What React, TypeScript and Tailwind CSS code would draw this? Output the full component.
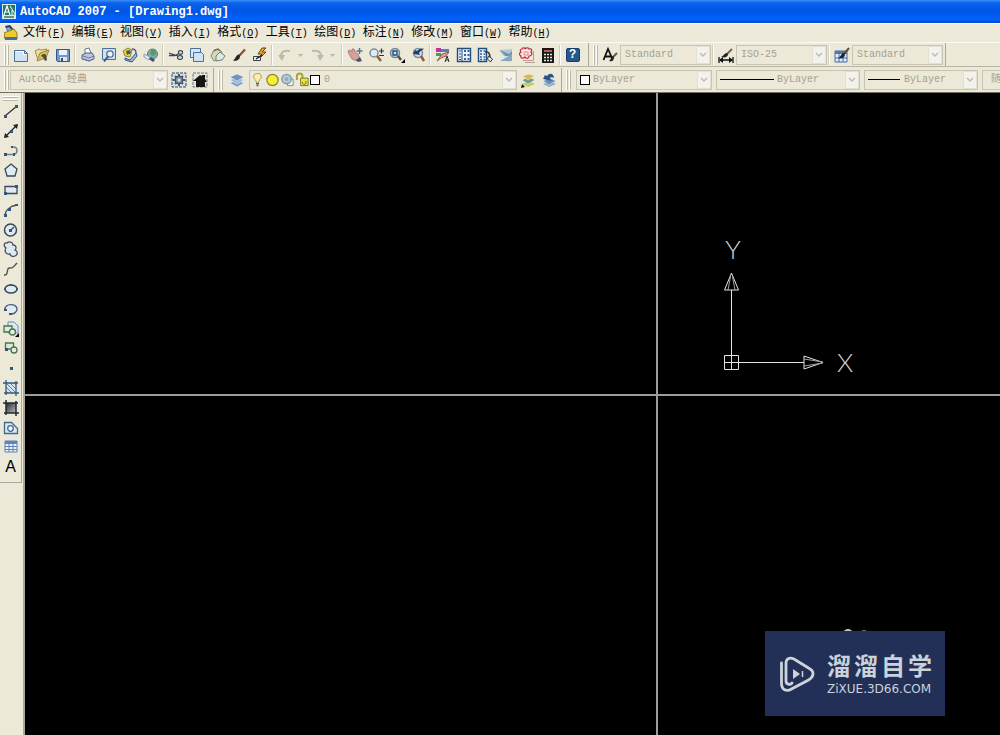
import type { ReactNode } from 'react';
import clsx from 'clsx';

type Tool = { label: string; icon: ReactNode };

const Icon = ({ children, narrow }: { children: ReactNode; narrow?: boolean }) => (
  <svg
    viewBox="0 0 16 16"
    className={clsx('h-4 shrink-0', narrow ? 'w-[15px]' : 'w-4')}
    fill="none"
    aria-hidden="true"
  >
    {children}
  </svg>
);

const menus = [
  ['文件', 'F'],
  ['编辑', 'E'],
  ['视图', 'V'],
  ['插入', 'I'],
  ['格式', 'O'],
  ['工具', 'T'],
  ['绘图', 'D'],
  ['标注', 'N'],
  ['修改', 'M'],
  ['窗口', 'W'],
  ['帮助', 'H'],
];

const fileTools: Tool[] = [
  {
    label: '新建',
    icon: (
      <>
        <path d="M1.5 3.5h10l3 3v8h-13z" fill="#cfe3f5" stroke="#4b6f98" />
        <path d="M2.5 4.5h8v3h3" stroke="#fff" />
        <path d="M11.5 3.5v3h3" stroke="#4b6f98" />
      </>
    ),
  },
  {
    label: '打开',
    icon: (
      <>
        <path d="M1 4l4-2 2 1 6-1-2 4-7 7z" fill="#f0dc96" stroke="#8f7a3a" strokeWidth="0.8" />
        <path d="M3 14l3-8 9-3-3 8z" fill="#d9bc5c" stroke="#8f7a3a" strokeWidth="0.8" />
        <path d="M7 9c1-2 4-3 5-1l1 5-2 1-2-4z" fill="#4c4a3a" />
      </>
    ),
  },
  {
    label: '保存',
    icon: (
      <>
        <path d="M1.5 2.5h13v12h-12l-1-1z" fill="#6f97c8" stroke="#33598c" />
        <path d="M4 3h8v5H4z" fill="#e9f1fa" />
        <path d="M5 10h7v4H5z" fill="#dbe6f2" />
        <path d="M6 11h2v3H6z" fill="#2c4f82" />
      </>
    ),
  },
];

const plotTools: Tool[] = [
  {
    label: '打印',
    icon: (
      <>
        <path d="M5 7V2l4-1 2 5" fill="#fff" stroke="#66739b" />
        <path d="M2 8l4-2h6l2 3v3l-5 2-7-2z" fill="#bcc6df" stroke="#4e5c86" />
        <path d="M3 9l6 2 5-2M4 12l5 2" stroke="#6e7aa4" />
      </>
    ),
  },
  {
    label: '打印预览',
    icon: (
      <>
        <path d="M1.5 1.5h13v11h-13z" fill="#cfe0f1" stroke="#4b6f98" />
        <circle cx="9" cy="7" r="3.2" fill="#eef6fc" stroke="#4f7198" strokeWidth="1.3" />
        <path d="M7 9.500l-4 5" stroke="#315786" strokeWidth="2" />
      </>
    ),
  },
  {
    label: '发布',
    icon: (
      <>
        <path d="M1 4l5-3 4 2-2 7-5-1z" fill="#f1d233" stroke="#7a6a20" strokeWidth="0.8" />
        <path d="M4 4l4-1 1 3-4 2z" fill="#2d6275" />
        <path d="M3 11l5 2 6-7 1 3-5 6-7-2z" fill="#9db9d8" stroke="#35557f" />
        <path d="M10 2c3 0 4 2 4 4" stroke="#44618a" strokeWidth="1.3" />
      </>
    ),
  },
  {
    label: '三维 DWF',
    icon: (
      <>
        <circle cx="9.500" cy="7" r="5" fill="#7ea9bb" stroke="#56788c" />
        <path d="M8 3l4 0 1 4-3 2-3-2z" fill="#5d9a5a" />
        <path d="M1 7l6 3-1 3-5-3z" fill="#e4edf5" stroke="#8aa0b0" />
        <path d="M6 12l4 3 2-2-4-3z" fill="#3f526a" />
      </>
    ),
  },
];

const editTools: Tool[] = [
  {
    label: '剪切',
    icon: (
      <>
        <path d="M1 6l9 3M1 8.500h6l4-2" stroke="#3a4656" strokeWidth="1.3" />
        <ellipse cx="12.500" cy="5.500" rx="2" ry="1.800" stroke="#3a4656" strokeWidth="1.2" />
        <ellipse cx="12" cy="10.500" rx="2.500" ry="1.800" stroke="#3a4656" strokeWidth="1.2" />
      </>
    ),
  },
  {
    label: '复制',
    icon: (
      <>
        <path d="M1.500 1.500h10v9h-10z" fill="#d6e6f5" stroke="#47729f" />
        <path d="M4.500 5.500h8l2 2v7h-10z" fill="#cfe3f5" stroke="#47729f" />
      </>
    ),
  },
  {
    label: '粘贴',
    icon: (
      <>
        <path d="M1 9l3-6 4-1 4 3-2 7-6 2z" fill="#d9d8b4" stroke="#84866a" />
        <path d="M6 9l4-4 5 4-3 4-6 1z" fill="#dfe9ea" stroke="#6a8076" />
        <path d="M4 4l4-2 2 2" stroke="#6b6b55" strokeWidth="1.3" />
      </>
    ),
  },
  {
    label: '特性匹配',
    icon: (
      <>
        <path d="M14 2.500L8 9" stroke="#8a4a36" strokeWidth="2.200" />
        <path d="M8 7.500c-3 0-3 4-6 6 4 1 7-1 7-4.500z" fill="#262626" />
      </>
    ),
  },
  {
    label: '块编辑器',
    icon: (
      <>
        <path d="M1.500 9.500h7v4h-7z" fill="#e8eef4" stroke="#36404e" />
        <path d="M10 1L6 7h4l-2 4 6-6h-4l4-4z" fill="#f0aa30" stroke="#6b4210" />
        <path d="M4 12l6-4" stroke="#222" strokeWidth="1.500" />
      </>
    ),
  },
];

const zoomTools: Tool[] = [
  {
    label: '实时平移',
    icon: (
      <>
        <path d="M1 4l2-1 2 2 0-3 2 0 2 4 2 1 2 5-3 2-5-2-3-5z" fill="#d3a09c" stroke="#a56f6c" strokeWidth="0.8" />
        <path d="M12.500 1v6M9.500 4h6" stroke="#5c728c" strokeWidth="1.500" />
        <path d="M9 13l4-3 2 4-4 1z" fill="#44556e" />
      </>
    ),
  },
  {
    label: '实时缩放',
    icon: (
      <>
        <circle cx="6" cy="6" r="4" fill="#dbeaf3" stroke="#7f8f99" strokeWidth="1.500" />
        <path d="M9 9l4 5" stroke="#8a5e40" strokeWidth="2.500" />
        <path d="M11 4h5M13.500 1.500v5M11 8.500h5" stroke="#223956" strokeWidth="1.200" />
      </>
    ),
  },
  {
    label: '窗口缩放',
    icon: (
      <>
        <circle cx="6" cy="6" r="4.500" fill="#cde0ef" stroke="#6f8496" strokeWidth="1.500" />
        <path d="M4 4h4v4H4z" stroke="#274b78" strokeWidth="1.400" />
        <path d="M9 9l3 4" stroke="#5a4c44" strokeWidth="2.500" />
        <path d="M16 12v4h-4z" fill="#000" />
      </>
    ),
  },
  {
    label: '缩放上一个',
    icon: (
      <>
        <circle cx="8" cy="6" r="4.500" fill="#cde0ef" stroke="#7d909f" strokeWidth="1.500" />
        <path d="M11 9l3 5" stroke="#8a5e40" strokeWidth="2.500" />
        <path d="M3 7l2-4 2 1c2-2 4-3 7-2-3 1-4 3-5 4l1 2z" fill="#263f66" />
      </>
    ),
  },
];

const paletteTools: Tool[] = [
  {
    label: '特性',
    icon: (
      <>
        <path d="M1 1h5v4H1z" fill="#b935a4" />
        <path d="M1 6h5v3H1z" fill="#3da05a" />
        <path d="M6 2h8v3H6z" fill="#547fc3" />
        <path d="M2 14l5-7 7-2-3 4-5 2z" fill="#e2a38e" stroke="#7f4438" strokeWidth="0.8" />
        <path d="M10 15l2-6 2 6M11 13h3" stroke="#303030" />
      </>
    ),
  },
  {
    label: '设计中心',
    icon: (
      <>
        <path d="M1.500 1.500h13v13h-13z" fill="#eaf3fb" stroke="#244c7c" strokeWidth="1.400" />
        <path d="M6 2v12" stroke="#244c7c" />
        <path d="M3 4h2M3 7h2M3 10h2M3 12.500h2" stroke="#244c7c" />
        <path d="M8 4h2M11.500 4h2M8 8h2M11.500 8h2M8 12h2M11.500 12h2" stroke="#316398" strokeWidth="2" />
      </>
    ),
  },
  {
    label: '工具选项板',
    icon: (
      <>
        <path d="M1.500 1.500h8v13h-8z" fill="#eaf3fb" stroke="#244c7c" strokeWidth="1.400" />
        <path d="M3 4h2M3 7h2M3 10h2M3 12.500h2M6.500 4h2M6.500 7h2M6.500 10h2M6.500 12.500h2" stroke="#316398" strokeWidth="1.500" />
        <path d="M8 5c4-1 5 2 5 6" stroke="#333" strokeWidth="1.500" />
        <path d="M11.500 9l4 3-2 3-3-3z" fill="#eee" stroke="#333" />
      </>
    ),
  },
  {
    label: '图纸集',
    icon: (
      <>
        <path d="M1 3l13-1v11l-4 2z" fill="#b4c6d4" />
        <path d="M2 3l9 4 3-3v6l-5 1z" fill="#6f93b0" />
        <path d="M1 10l8-1 6 2-7 3z" fill="#e3ebef" />
        <path d="M2 14l12-7v7z" fill="#8aa7bd" />
      </>
    ),
  },
  {
    label: '标记集',
    icon: (
      <>
        <path d="M4 13.500h10.500V4M6 15.500h10" stroke="#b99a9a" />
        <path d="M3 2c1-2 3-1 3 0 1-2 4-1 4 0 3-1 3 2 2 3 2 2 0 4-2 4 0 3-3 3-4 1-2 2-5 1-4-1-2-1-2-3 0-4-1-1-1-3 1-3z" fill="#f9e7e7" stroke="#c32f3e" strokeWidth="1.200" />
        <path d="M5 5h4v3H5z" stroke="#dc8a8f" />
      </>
    ),
  },
  {
    label: '计算器',
    icon: (
      <>
        <path d="M2 1h12v15H2z" fill="#171717" />
        <path d="M4 3h8v2H4z" fill="#c25a5a" />
        <path d="M4 7.500h2M7 7.500h2M10 7.500h2M4 10.500h2M7 10.500h2M10 10.500h2M4 13.500h2M7 13.500h2M10 13.500h2" stroke="#e9e5d4" strokeWidth="1.500" />
      </>
    ),
  },
];

const drawTools: Tool[] = [
  {
    label: '直线',
    icon: (
      <>
        <path d="M2 13L14 3" stroke="#333" strokeWidth="1.300" />
        <path d="M1 12h3v3H1zM12 2h3v3h-3z" fill="#31567f" />
      </>
    ),
  },
  {
    label: '构造线',
    icon: (
      <>
        <path d="M2 14L14 2" stroke="#222" strokeWidth="1.300" />
        <path d="M1 15l1-5 4 4zM15 1l-5 1 4 4z" fill="#222" />
        <path d="M7 7h3v3H7z" fill="#31567f" />
      </>
    ),
  },
  {
    label: '多段线',
    icon: (
      <>
        <path d="M2 12.500h9c4-1 4-7 0-7.500H8" stroke="#6e7f8e" strokeWidth="1.400" />
        <path d="M1 11h3v3H1zM10 11h2v3h-2zM8 4h2v2H8z" fill="#31567f" />
      </>
    ),
  },
  {
    label: '正多边形',
    icon: <path d="M8 2l6 5-2 7H4L2 7z" fill="#dfeaf3" stroke="#39485a" strokeWidth="1.300" />,
  },
  {
    label: '矩形',
    icon: (
      <>
        <path d="M2 4.500h12v7H2z" fill="#dfeaf3" stroke="#39485a" strokeWidth="1.300" />
        <path d="M1 10h3v3H1zM12 3h3v3h-3z" fill="#31567f" />
      </>
    ),
  },
  {
    label: '圆弧',
    icon: (
      <>
        <path d="M2 14C2 8 7 4 14 3" stroke="#4a5058" strokeWidth="1.300" />
        <path d="M1 12h3v3H1zM5 6h3v3H5zM12 2h3v2h-3z" fill="#31567f" />
      </>
    ),
  },
  {
    label: '圆',
    icon: (
      <>
        <circle cx="7.500" cy="8" r="6" fill="#dfeaf3" stroke="#39485a" strokeWidth="1.500" />
        <path d="M7 9l4-4" stroke="#31567f" strokeWidth="1.500" />
        <path d="M6 7h3v3H6z" fill="#31567f" />
      </>
    ),
  },
  {
    label: '修订云线',
    icon: (
      <path d="M3 7C0 5 1 1 4 2c2-2 6-1 6 2 3 0 4 3 2 5 3 1 3 5 0 6-2 1-5 0-5-2-4 1-6-3-4-6z" fill="#dfe7f0" stroke="#454f60" strokeWidth="1.300" />
    ),
  },
  {
    label: '样条曲线',
    icon: <path d="M1 14c5 1 2-8 6-7 3 1 4-2 7-5" stroke="#565249" strokeWidth="1.400" />,
  },
  {
    label: '椭圆',
    icon: (
      <>
        <ellipse cx="8" cy="8" rx="6" ry="4" fill="#dfeaf3" stroke="#39485a" strokeWidth="1.500" />
        <path d="M1 7h2v2H1zM13 7h2v2h-2zM7 3h2v2H7z" fill="#31567f" />
      </>
    ),
  },
  {
    label: '椭圆弧',
    icon: (
      <>
        <path d="M2 9C1 2 14 2 14 8c0 3-3 5-6 5V8z" fill="#dfeaf3" />
        <path d="M2 9C1 2 14 2 14 8c0 3-3 5-6 5" stroke="#44618a" strokeWidth="1.400" />
        <path d="M1 8h3v2H1zM6 12h3v2H6z" fill="#31567f" />
      </>
    ),
  },
  {
    label: '插入块',
    icon: (
      <>
        <path d="M5 1h6l4 4v7H5z" fill="#dce8f3" stroke="#6e8cab" />
        <path d="M1 5h8v6H1z" fill="#dcecd8" stroke="#4a7350" strokeWidth="1.300" />
        <circle cx="9.500" cy="11" r="3" fill="#e5eee0" stroke="#4a7350" strokeWidth="1.300" />
        <path d="M16 12v4h-4z" fill="#000" />
      </>
    ),
  },
  {
    label: '创建块',
    icon: (
      <>
        <path d="M2.500 3h8v6h-8z" fill="#dcecd8" stroke="#4a7350" strokeWidth="1.300" />
        <circle cx="11" cy="10" r="3" fill="#e5eee0" stroke="#4a7350" strokeWidth="1.300" />
        <path d="M2 8h3v3H2z" fill="#31567f" />
      </>
    ),
  },
  { label: '点', icon: <path d="M7 7h3v3H7z" fill="#31567f" /> },
  {
    label: '图案填充',
    icon: (
      <>
        <path d="M3 3h10v10H3z" fill="#d5e6f3" />
        <path d="M3 7l6 6M3 3l10 10M7 3l6 6M3 11l2 2M11 3l2 2" stroke="#5a83aa" />
        <path d="M3 0v15M13 1v15M0 3h15M1 13h15" stroke="#315a80" strokeWidth="1.300" />
      </>
    ),
  },
  {
    label: '渐变色',
    icon: (
      <>
        <defs>
          <linearGradient id="shade" x1="0" y1="0" x2="1" y2="1">
            <stop offset="0" stopColor="#26292c" />
            <stop offset="1" stopColor="#b9bdc0" />
          </linearGradient>
        </defs>
        <path d="M3 3h10v10H3z" fill="url(#shade)" />
        <path d="M3 0v15M13 1v15M0 3h15M1 13h15" stroke="#1f2a33" strokeWidth="1.500" />
      </>
    ),
  },
  {
    label: '面域',
    icon: (
      <>
        <path d="M1.500 2.500h7l6 6v5h-13z" fill="#d8e8f5" stroke="#44698f" strokeWidth="1.300" />
        <circle cx="7.500" cy="8.500" r="2.800" fill="#f6fafd" stroke="#44698f" strokeWidth="1.300" />
      </>
    ),
  },
  {
    label: '表格',
    icon: (
      <>
        <path d="M2 2h12v11H2z" fill="#edf4fb" stroke="#5b81b5" />
        <path d="M2 2h12v3H2z" fill="#5d86c0" />
        <path d="M6 3v10M10 3v10M2 7.500h12M2 10.500h12" stroke="#5b81b5" />
      </>
    ),
  },
];

const textStyleIcon = (
  <>
    <path d="M1.500 13L6 2l4 9M3 9.500h6" stroke="#111" strokeWidth="1.800" />
    <path d="M15 6l-4 4" stroke="#6a5948" strokeWidth="2.200" />
    <path d="M11 9c-2 0-2 4-4 5 3 1 5 0 5-4z" fill="#222" />
  </>
);

const dimStyleIcon = (
  <>
    <path d="M1 10v6M15 10v6" stroke="#111" strokeWidth="1.300" />
    <path d="M2 13h12" stroke="#111" strokeWidth="1.500" />
    <path d="M1 13l4-3v6zM15 13l-4-3v6z" fill="#111" />
    <path d="M14 2L9 7" stroke="#8a5a48" strokeWidth="2" />
    <path d="M9 6c-3 0-3 3-6 4 4 1 7 0 7-3z" fill="#222" />
  </>
);

const tableStyleIcon = (
  <>
    <path d="M1 4h12v11H1z" fill="#e2edf8" stroke="#4669a2" />
    <path d="M1 4h12v3H1z" fill="#5578ae" />
    <path d="M5 4v11M9 4v11M1 11h12" stroke="#4669a2" />
    <path d="M15 1l-5 6" stroke="#6a4a38" strokeWidth="2" />
    <path d="M10 6c-3 0-3 4-6 5 4 1 7 0 7-4z" fill="#1c2433" />
  </>
);

const layersIcon = (
  <>
    <path d="M1 11l7-3 7 3-7 4z" fill="#7ea0c4" stroke="#f3f5f5" strokeWidth="0.500" />
    <path d="M1 8l7-3 7 3-7 4z" fill="#9bb8d6" stroke="#f3f5f5" strokeWidth="0.500" />
    <path d="M1 5l7-3 7 3-7 4z" fill="#6f95bf" stroke="#f3f5f5" strokeWidth="0.500" />
  </>
);

const gearIcon = (
  <>
    <path d="M1 1h14v14H1z" fill="#d7dfe6" stroke="#33475c" strokeDasharray="3 1" />
    <path d="M8 2v12M2 8h12M4 4l8 8M12 4l-8 8" stroke="#4a5a6a" strokeWidth="2" />
    <circle cx="8" cy="8" r="4" fill="#78899a" stroke="#33475c" />
    <circle cx="8" cy="8" r="1.500" fill="#e8edf1" />
  </>
);

const homeIcon = (
  <>
    <path d="M1 1h14v14H1z" fill="#e4e4dc" stroke="#777" strokeDasharray="3 1" />
    <path d="M1 9l7-6 2 1V3h3v4l2 3h-2v5H4V9z" fill="#151515" />
  </>
);

const undoIcon = (
  <>
    <path d="M4 9c0-5 5-6 9-5" stroke="#bdbaad" strokeWidth="2" />
    <path d="M1 8h7l-3 6z" fill="#bdbaad" />
  </>
);

const redoIcon = (
  <>
    <path d="M12 9c0-5-5-6-9-5" stroke="#bdbaad" strokeWidth="2" />
    <path d="M15 8H8l3 6z" fill="#bdbaad" />
  </>
);

function ToolButton({ label, icon, tall }: Tool & { tall?: boolean }) {
  return (
    <button
      aria-label={label}
      className={clsx('w-[21px] flex items-center justify-center shrink-0', tall ? 'h-full' : 'h-5')}
    >
      <Icon>{icon}</Icon>
    </button>
  );
}

function ToolGroup({ tools }: { tools: Tool[] }) {
  return (
    <div className="flex">
      {tools.map((tool) => (
        <ToolButton key={tool.label} {...tool} />
      ))}
    </div>
  );
}

function ListArrow({ label }: { label: string }) {
  return (
    <button aria-label={label} className="w-[11px] h-5 flex items-center justify-center">
      <svg viewBox="0 0 5 3" className="w-[5px] h-[3px]" aria-hidden="true">
        <path d="M0 0h5L2.500 3z" fill="#b8b4a3" />
      </svg>
    </button>
  );
}

const Divider = () => (
  <div className="w-1 h-5 flex justify-center shrink-0">
    <div className="w-[2px] bg-[#d0ccba] border-r border-white" />
  </div>
);

const Grip = () => (
  <div className="flex gap-px w-[6px] h-5 shrink-0">
    <div className="w-[2px] border-l border-white bg-[#bdb9a6]" />
    <div className="w-[2px] border-l border-white bg-[#bdb9a6]" />
  </div>
);

type ComboProps = {
  label: string;
  value: string;
  className: string;
  selectClass?: string;
  children?: ReactNode;
};

function Combo({ label, value, className, selectClass = 'pl-1', children }: ComboProps) {
  return (
    <div className={clsx('relative h-5 shrink-0', className)}>
      <select
        aria-label={label}
        disabled
        className={clsx(
          'block w-full h-full appearance-none bg-[#ece9d8] border border-[#c9c5b2] text-[#a5a18f] text-[10px] leading-4 opacity-100',
          selectClass
        )}
      >
        <option>{value}</option>
      </select>
      {children}
      <div className="absolute right-px top-px bottom-px w-[14px] bg-[#f3f2ec] border border-[#e2dfd3] flex items-center justify-center pointer-events-none">
        <svg viewBox="0 0 8 6" className="w-2 h-[6px]" fill="none" aria-hidden="true">
          <path d="M1 1l3 3 3-3" stroke="#bfbcac" strokeWidth="1.500" />
        </svg>
      </div>
    </div>
  );
}

const barClass = 'flex items-center h-6 shrink-0 border-r border-[#aca899]';

function StandardBar() {
  return (
    <div className={clsx(barClass, 'w-[589px] pl-1')}>
      <Grip />
      <ToolGroup tools={fileTools} />
      <Divider />
      <ToolGroup tools={plotTools} />
      <Divider />
      <ToolGroup tools={editTools} />
      <Divider />
      <ToolButton label="放弃" icon={undoIcon} />
      <ListArrow label="放弃列表" />
      <ToolButton label="重做" icon={redoIcon} />
      <ListArrow label="重做列表" />
      <div className="w-[2px]" />
      <Divider />
      <ToolGroup tools={zoomTools} />
      <Divider />
      <ToolGroup tools={paletteTools} />
      <Divider />
      <button aria-label="帮助" className="w-[21px] h-5 flex items-center justify-center">
        <span className="w-[14px] h-[14px] rounded-xs bg-[#24588f] border border-[#173d6a] text-white font-bold text-[12px] leading-3">
          ?
        </span>
      </button>
    </div>
  );
}

function StylesBar() {
  return (
    <div className={clsx(barClass, 'pl-1 pr-[2px]')}>
      <Grip />
      <ToolButton label="文字样式" icon={textStyleIcon} />
      <Combo label="文字样式控制" value="Standard" className="w-[91px]" />
      <Divider />
      <ToolButton label="标注样式" icon={dimStyleIcon} />
      <Combo label="标注样式控制" value="ISO-25" className="w-[91px]" />
      <Divider />
      <ToolButton label="表格样式" icon={tableStyleIcon} />
      <Combo label="表格样式控制" value="Standard" className="w-[91px]" />
    </div>
  );
}

function LayerIcons() {
  return (
    <div className="absolute left-px top-[2px] flex items-center pointer-events-none">
      <Icon narrow>
        <path d="M8 1c5 0 5 5 2 7l-1 3H7L6 8C3 6 3 1 8 1z" fill="#fbf0ae" stroke="#a3985c" />
        <path d="M6.500 12h3M7 14h2" stroke="#555" strokeWidth="1.500" />
      </Icon>
      <Icon narrow>
        <circle cx="8" cy="8" r="6" fill="#f3ee36" stroke="#87852b" strokeWidth="1.300" />
      </Icon>
      <Icon narrow>
        <path d="M8 7h6v7H8z" fill="#f4f4ee" stroke="#7f8c96" />
        <circle cx="7" cy="7" r="5" fill="#b7cbd5" stroke="#7e99a7" strokeWidth="1.500" />
        <circle cx="7" cy="7" r="2" fill="#91acba" />
      </Icon>
      <Icon narrow>
        <path d="M2 8V4c0-4 6-4 6 0v4" stroke="#a2a534" strokeWidth="2" />
        <path d="M6 6h8v8H6z" fill="#ece54a" stroke="#7a7920" />
        <path d="M8 10a2 2 0 1 0 3-1" stroke="#66651a" />
      </Icon>
      <span className="w-[10px] h-[10px] bg-white border border-black" />
    </div>
  );
}

function Canvas() {
  return (
    <main className="relative flex-1 bg-black overflow-hidden">
      <div className="absolute left-0 right-0 top-[301px] h-[2px] bg-[#9c9c9c]" />
      <div className="absolute top-0 bottom-0 left-[631px] w-[2px] bg-[#9c9c9c]" />

      {/* UCS icon */}
      <svg
        viewBox="0 0 140 110"
        className="absolute left-[695px] top-[175px] w-[140px] h-[110px]"
        fill="none"
        stroke="#e4e4e4"
        aria-hidden="true"
      >
        <path d="M4.500 87.500h14v14h-14zM11.500 101V22M4.500 94.500H84" />
        <path d="M11.500 5l-7 17h14z" />
        <path d="M11 6l-3 16M12 6l3 16" stroke="#a0a0a0" />
        <path d="M103 94.500l-19-6.500v13z" />
        <path d="M103 94l-19-3M103 95l-19 3" stroke="#a0a0a0" />
      </svg>
      <span className="absolute left-[698px] top-[142px] w-5 text-center font-['Lato',sans-serif] font-light text-[26px] leading-7 text-[#d0d0d0]">
        Y
      </span>
      <span className="absolute left-[810px] top-[255px] w-5 text-center font-['Lato',sans-serif] font-light text-[26px] leading-7 text-[#d0d0d0]">
        X
      </span>

      <div className="absolute right-[55px] bottom-[19px] w-[180px] h-[85px]">
        <span className="absolute left-[78px] -top-[2px] w-[10px] h-[10px] rounded-full bg-[#c4c4c4]" />
        <span className="absolute left-[95px] -top-px w-2 h-2 rounded-full bg-[#777]" />
        <div className="relative w-full h-full bg-[#223057] flex items-center pl-[14px] gap-3">
          <svg viewBox="0 0 36 38" className="w-9 h-[38px] shrink-0" fill="none" aria-hidden="true">
            <path
              d="M2.500 8v20c0 7 5 9 10 6l17-9c6-4 6-9 0-12L15 4C10 2 7 4 7 8v18c0 4 5 4 6 2"
              stroke="#cdd3d8"
              strokeWidth="2.800"
              strokeLinecap="round"
            />
            <path d="M14 14v10l7-5z" fill="#cdd3d8" />
            <path d="M23.500 16v6" stroke="#cdd3d8" strokeWidth="1.500" />
          </svg>
          <div className="w-[105px] flex flex-col gap-[3px] text-[#ccd2d9] whitespace-nowrap">
            <div className="flex justify-between font-['Noto_Sans_CJK_SC',sans-serif] font-bold text-[24px] leading-7">
              {[...'溜溜自学'].map((char, i) => (
                <span key={i}>{char}</span>
              ))}
            </div>
            <div className="font-['DejaVu_Sans',sans-serif] text-[12px] leading-[14px]">ZiXUE.3D66.COM</div>
          </div>
        </div>
      </div>
    </main>
  );
}

export default function App() {
  return (
    <div className="min-h-screen flex flex-col overflow-hidden bg-[#ece9d8] font-['Liberation_Mono','Noto_Sans_CJK_SC',monospace]">
      <header className="h-[23px] shrink-0 flex items-center gap-1 pl-[2px] bg-[linear-gradient(#3c90fa_0,#0a62ee_3px,#0054e3_50%,#0064fc_85%,#0048d0)]">
        <svg viewBox="0 0 14 15" className="w-[14px] h-[15px]" fill="none" aria-hidden="true">
          <path d="M0 0h14v15H0z" fill="#dceee8" />
          <path d="M1 1h12v10H1z" fill="#27786c" />
          <path d="M2 11l3-9 3 9M3 8h4" stroke="#fff" strokeWidth="1.200" />
          <path d="M8 2l5 8M10 6v5h3" stroke="#cfe9e0" strokeWidth="1.200" />
          <path d="M2 13h10" stroke="#14544d" strokeWidth="1.200" />
        </svg>
        <h1 className="text-white font-bold text-[12px] leading-4 whitespace-pre">AutoCAD 2007 - [Drawing1.dwg]</h1>
      </header>

      <nav className="h-[19px] shrink-0 flex items-center border-t border-white pl-1 gap-[5px]">
        <svg viewBox="0 0 14 16" className="w-[14px] h-4 shrink-0" fill="none" aria-hidden="true">
          <path d="M1 1l5-1 5 6-6 4z" fill="#263b57" />
          <path d="M2 3l3-1 3 3-3 3z" fill="#78a8d0" />
          <path d="M0 8l5-2 5-2 3 4v6H1z" fill="#f0c92d" stroke="#96771b" />
          <path d="M1 12h12v3H1z" fill="#3e70ad" />
        </svg>
        <div className="grid grid-cols-11 w-[534px]">
          {menus.map(([name, key]) => (
            <button key={key} className="text-left whitespace-nowrap text-[12px] leading-4 text-black">
              {name}
              <span className="text-[10px]">
                (<u>{key}</u>)
              </span>
            </button>
          ))}
        </div>
      </nav>

      <div className="flex h-6 shrink-0 border-t border-[#fbfaf5]">
        <StandardBar />
        <StylesBar />
      </div>

      <div className="flex h-[27px] shrink-0 border-t border-[#b9b5a3] border-b border-b-[#716f64] items-center pt-px">
        <div className={clsx(barClass, 'w-[214px] pl-1')}>
          <Grip />
          <Combo label="工作空间" value="AutoCAD 经典" className="w-[158px]" selectClass="pl-2" />
          <ToolButton label="工作空间设置" icon={gearIcon} />
          <ToolButton label="我的工作空间" icon={homeIcon} />
        </div>
        <div className={clsx(barClass, 'w-[348px] pl-1')}>
          <Grip />
          <div className="w-[2px]" />
          <ToolButton label="图层特性管理器" icon={layersIcon} />
          <div className="w-[2px]" />
          <Combo label="图层" value="0" className="w-[268px]" selectClass="pl-[74px]">
            <LayerIcons />
          </Combo>
          <ToolButton
            label="将对象的图层置为当前"
            icon={
              <>
                <path d="M2 12l7-3 6 3-7 3z" fill="#d0c65a" />
                <path d="M2 8l7-3 6 3-7 4z" fill="#6c9c92" stroke="#f3f5f5" strokeWidth="0.500" />
                <path d="M2 4l7-2 6 2-7 4z" fill="#d9bb50" stroke="#f3f5f5" strokeWidth="0.500" />
                <path d="M1 16l1-4 3 3z" fill="#111" />
              </>
            }
          />
          <ToolButton
            label="上一个图层"
            icon={
              <>
                <path d="M2 12l7-3 6 3-7 3z" fill="#8fadca" />
                <path d="M2 9l7-3 6 3-7 4z" fill="#6790bb" stroke="#f3f5f5" strokeWidth="0.500" />
                <path d="M2 7l2-4 2 1c3-4 7-2 7 2-2-1-4-1-4 1l2 2z" fill="#29558a" />
              </>
            }
          />
        </div>
        <div className="flex items-center pl-1 gap-1 min-w-0">
          <Grip />
          <Combo label="颜色" value="ByLayer" className="w-[136px]" selectClass="pl-4">
            <span className="absolute left-1 top-[5px] w-[10px] h-[10px] bg-white border border-black" />
          </Combo>
          <Combo label="线型" value="ByLayer" className="w-[144px]" selectClass="pl-[60px]">
            <span className="absolute left-1 top-[9px] w-[54px] h-px bg-black" />
          </Combo>
          <Combo label="线宽" value="ByLayer" className="w-[114px]" selectClass="pl-[39px]">
            <span className="absolute left-1 top-[9px] w-8 h-px bg-black" />
          </Combo>
          <Combo label="打印样式" value="随颜色" className="w-[110px]" selectClass="pl-2" />
        </div>
      </div>

      <div className="flex flex-1">
        <aside className="w-[25px] shrink-0 border-r-2 border-[#aca899]">
          <div className="w-[22px] border-r border-b border-[#aca899] pt-[3px] pb-[5px]">
            <div className="mx-[3px] flex flex-col gap-px">
              <div className="h-[2px] border-t border-white bg-[#bdb9a6]" />
              <div className="h-[2px] border-t border-white bg-[#bdb9a6]" />
            </div>
            <div className="grid auto-rows-fr h-[376px]">
              {drawTools.map((tool) => (
                <ToolButton key={tool.label} {...tool} tall />
              ))}
              <button
                aria-label="多行文字"
                className="w-[21px] font-['Liberation_Sans',sans-serif] text-[16px] leading-5 text-black"
              >
                A
              </button>
            </div>
          </div>
        </aside>
        <Canvas />
      </div>
    </div>
  );
}
